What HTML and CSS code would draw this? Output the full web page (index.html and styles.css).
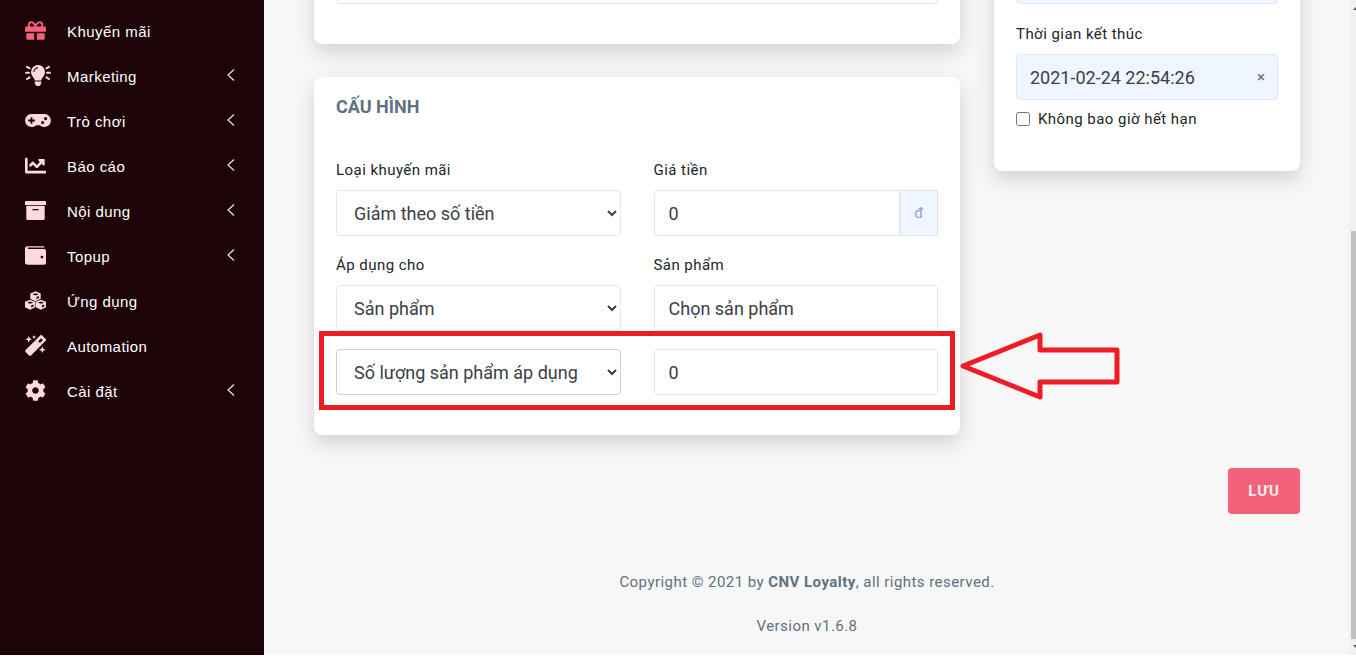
FILE: index.html
```
<!DOCTYPE html>
<html lang="vi">
<head>
    <meta charset="UTF-8">
    <meta name="viewport" content="width=device-width, initial-scale=1.0">
    <title>CNV Loyalty - Khuyến mãi</title>
    <link rel="stylesheet" href="styles.css">
</head>
<body>
    <div class="app">
        <nav class="sidebar">
            <a class="nav-item active" href="#">
                <span class="nav-icon"><svg width="21" height="21" viewBox="0 0 512 512"><path d="M32 448c0 17.7 14.3 32 32 32h160V320H32v128zm256 32h160c17.7 0 32-14.3 32-32V320H288v160zm192-320h-42.1c6.2-12.1 10.1-25.5 10.1-40 0-48.5-39.5-88-88-88-41.6 0-68.5 21.3-103 68.3-34.5-47-61.4-68.3-103-68.3-48.5 0-88 39.5-88 88 0 14.5 3.8 27.9 10.1 40H32c-17.7 0-32 14.3-32 32v80c0 8.8 7.2 16 16 16h480c8.8 0 16-7.2 16-16v-80c0-17.7-14.3-32-32-32zm-326.1 0c-22.1 0-40-17.9-40-40s17.9-40 40-40c19.9 0 34.6 3.3 86.1 80h-86.1zm206.1 0h-86.1c51.4-76.5 65.7-80 86.1-80 22.1 0 40 17.9 40 40s-17.9 40-40 40z"/></svg></span>
                <span class="nav-text">Khuyến mãi</span>
            </a>
            <a class="nav-item" href="#">
                <span class="nav-icon"><svg width="26" height="21" viewBox="0 0 26 21"><path fill-rule="evenodd" d="M13 0a7 7 0 0 0-7 7c0 2 .8 3.400 1.800 4.700C8.800 13 9.500 14 9.800 15.500h6.400c.3-1.500 1-2.500 2-3.800C19.200 10.400 20 9 20 7a7 7 0 0 0-7-7zm0 3.400A3.600 3.600 0 0 0 9.400 7H8.300A4.700 4.700 0 0 1 13 2.300zM9.800 16.600h6.400v1.900L15 20.400a1 1 0 0 1-.8.500h-2.400a1 1 0 0 1-.8-.5l-1.200-1.900z"/><path class="stroke" d="M1 7.800h3M22 7.800h3M2 1.900l2.600 1.400M24 1.900l-2.600 1.400M2 14l2.600-1.600M24 14l-2.600-1.600"/></svg></span>
                <span class="nav-text">Marketing</span>
                <svg class="chevron" width="8" height="12" viewBox="0 0 8 12"><path d="M7 .5 1 6l6 5.500"/></svg>
            </a>
            <a class="nav-item" href="#">
                <span class="nav-icon"><svg width="26" height="21" viewBox="0 0 26 21"><path fill-rule="evenodd" d="M6.500 4h13a6.500 6.500 0 1 1-4.600 11.200h-3.800A6.500 6.500 0 1 1 6.500 4zm-.9 3.200v2.400H3.200v1.800h2.400v2.400h1.800v-2.400h2.400V9.600H7.400V7.200zM17.600 11a1.600 1.600 0 1 0 0 3.200 1.600 1.600 0 0 0 0-3.200zm3-4a1.600 1.600 0 1 0 0 3.200 1.600 1.600 0 0 0 0-3.200z"/></svg></span>
                <span class="nav-text">Trò chơi</span>
                <svg class="chevron" width="8" height="12" viewBox="0 0 8 12"><path d="M7 .5 1 6l6 5.500"/></svg>
            </a>
            <a class="nav-item" href="#">
                <span class="nav-icon"><svg width="21" height="21" viewBox="0 0 512 512"><path d="M496 384H64V80c0-8.840-7.160-16-16-16H16C7.160 64 0 71.160 0 80v336c0 17.670 14.330 32 32 32h464c8.840 0 16-7.160 16-16v-32c0-8.840-7.160-16-16-16zM464 96H345.940c-21.380 0-32.090 25.850-16.970 40.970l32.400 32.400L288 242.750l-73.370-73.370c-12.500-12.500-32.760-12.500-45.250 0l-68.690 68.690c-6.250 6.250-6.250 16.380 0 22.630l22.620 22.620c6.250 6.250 16.380 6.250 22.630 0L192 237.250l73.370 73.370c12.500 12.500 32.760 12.500 45.250 0l96-96 32.400 32.400c15.120 15.120 40.970 4.410 40.970-16.970V112c.01-8.840-7.150-16-15.990-16z"/></svg></span>
                <span class="nav-text">Báo cáo</span>
                <svg class="chevron" width="8" height="12" viewBox="0 0 8 12"><path d="M7 .5 1 6l6 5.500"/></svg>
            </a>
            <a class="nav-item" href="#">
                <span class="nav-icon"><svg width="21" height="21" viewBox="0 0 21 21"><path fill-rule="evenodd" d="M1 1h19a1 1 0 0 1 1 1v3H0V2a1 1 0 0 1 1-1zM1.300 5.800h18.400v12.900a1.300 1.300 0 0 1-1.300 1.300H2.600a1.300 1.300 0 0 1-1.300-1.300zM8 9a.6.6 0 0 0 0 1.300h5A.6.6 0 0 0 13 9z"/></svg></span>
                <span class="nav-text">Nội dung</span>
                <svg class="chevron" width="8" height="12" viewBox="0 0 8 12"><path d="M7 .5 1 6l6 5.500"/></svg>
            </a>
            <a class="nav-item" href="#">
                <span class="nav-icon"><svg width="21" height="21" viewBox="0 0 21 21"><path fill-rule="evenodd" d="M2.600 1.300h15.700a1.300 1.300 0 0 1 1.300 1.300H3.300a.65.65 0 0 0 0 1.300h15.700a2 2 0 0 1 2 2v11.800a2 2 0 0 1-2 2H2.600A2.600 2.600 0 0 1 0 17.100V3.900a2.600 2.600 0 0 1 2.600-2.600zM17 10.700a1.400 1.400 0 1 0 0 2.800 1.400 1.400 0 0 0 0-2.800z"/></svg></span>
                <span class="nav-text">Topup</span>
                <svg class="chevron" width="8" height="12" viewBox="0 0 8 12"><path d="M7 .5 1 6l6 5.500"/></svg>
            </a>
            <a class="nav-item" href="#">
                <span class="nav-icon"><svg width="21" height="21" viewBox="0 0 21 21"><g fill-rule="evenodd"><path d="M10.500 1.300 15.700 3.400V8.800l-5.200 2.400L5.300 8.800V3.400zM7.400 4.300l3.100 1.100 3.100-1.100-3.100-1.100zM11.500 7v2.200l2.400-1.100V6z"/><path d="M5.100 9.700 10.300 11.700v5.600l-5.200 2.400L0 17.300v-5.600zM2 12.700l3.100 1.100 3.100-1.100-3.100-1.100zM6.100 15.400v2.200l2.400-1.100v-2.100z"/><path d="M15.900 9.700l5.100 2v5.600l-5.100 2.400-5.200-2.400v-5.600zM12.800 12.700l3.100 1.100 3.100-1.100-3.100-1.100zM16.900 15.400v2.200l2.400-1.100v-2.100z"/></g></svg></span>
                <span class="nav-text">Ứng dụng</span>
            </a>
            <a class="nav-item" href="#">
                <span class="nav-icon"><svg width="21" height="21" viewBox="0 0 21 21"><path fill-rule="evenodd" d="M15.200.4a1.400 1.400 0 0 1 1.900 0l3.500 3.500a1.400 1.400 0 0 1 0 1.900L6 20.400a1.400 1.400 0 0 1-1.900 0L.6 16.900a1.400 1.400 0 0 1 0-1.900zM16.200 3.200l-3 3 1.700 1.700 3-3zM3.700 1l1 2.200L7 4.200l-2.300 1-1 2.300-1-2.300-2.300-1 2.300-1zM9 0l.7 1.400 1.400.6-1.400.7L9 4l-.7-1.300L7 2l1.300-.6zM17.300 11.500l1 2.200 2.300 1-2.300 1-1 2.300-1-2.300-2.300-1 2.300-1z"/></svg></span>
                <span class="nav-text">Automation</span>
            </a>
            <a class="nav-item" href="#">
                <span class="nav-icon"><svg width="21" height="21" viewBox="0 0 512 512"><path d="M487.400 315.700l-42.600-24.600c4.300-23.200 4.300-47 0-70.200l42.600-24.600c4.900-2.800 7.100-8.600 5.500-14-11.100-35.600-30-67.800-54.700-94.600-3.800-4.100-10-5.100-14.800-2.300L380.800 110c-17.900-15.400-38.500-27.300-60.800-35.100V25.800c0-5.600-3.900-10.500-9.400-11.700-36.700-8.200-74.300-7.800-109.200 0-5.500 1.200-9.400 6.100-9.400 11.700V75c-22.200 7.900-42.800 19.800-60.800 35.100L88.700 85.500c-4.900-2.800-11-1.900-14.800 2.300-24.700 26.700-43.600 58.900-54.700 94.600-1.700 5.400.6 11.200 5.500 14L67.300 221c-4.300 23.200-4.300 47 0 70.200l-42.600 24.600c-4.900 2.800-7.100 8.600-5.500 14 11.100 35.600 30 67.800 54.700 94.600 3.800 4.100 10 5.100 14.800 2.300l42.600-24.600c17.900 15.400 38.500 27.300 60.800 35.100v49.200c0 5.600 3.900 10.500 9.400 11.700 36.700 8.200 74.300 7.800 109.200 0 5.500-1.200 9.400-6.100 9.400-11.700v-49.200c22.200-7.900 42.800-19.800 60.800-35.100l42.600 24.600c4.900 2.800 11 1.900 14.800-2.300 24.700-26.700 43.600-58.900 54.700-94.600 1.500-5.500-.7-11.300-5.600-14.100zM256 336c-44.100 0-80-35.900-80-80s35.900-80 80-80 80 35.900 80 80-35.900 80-80 80z"/></svg></span>
                <span class="nav-text">Cài đặt</span>
                <svg class="chevron" width="8" height="12" viewBox="0 0 8 12"><path d="M7 .5 1 6l6 5.500"/></svg>
            </a>
        </nav>

        <main class="main">
            <div class="columns">
                <div class="column">
                    <section class="card">
                        <input class="control" type="text" aria-label="Mô tả">
                    </section>

                    <section class="card">
                        <h2 class="card-title">CẤU HÌNH</h2>
                        <div class="form-grid">
                            <div class="field">
                                <label for="type">Loại khuyến mãi</label>
                                <select class="control" id="type"><option>Giảm theo số tiền</option></select>
                            </div>
                            <div class="field">
                                <label for="price">Giá tiền</label>
                                <div class="input-group">
                                    <input class="control" id="price" type="text" value="0">
                                    <span class="addon">đ</span>
                                </div>
                            </div>
                            <div class="field">
                                <label for="apply">Áp dụng cho</label>
                                <select class="control" id="apply"><option>Sản phẩm</option></select>
                            </div>
                            <div class="field">
                                <label for="product">Sản phẩm</label>
                                <input class="control" id="product" type="text" value="Chọn sản phẩm">
                            </div>
                        </div>
                        <div class="form-grid highlighted">
                            <select class="control focused" aria-label="Điều kiện"><option>Số lượng sản phẩm áp dụng</option></select>
                            <input class="control" type="text" value="0" aria-label="Số lượng">
                            <div class="highlight-box"></div>
                            <svg class="highlight-arrow" width="160" height="70" viewBox="0 0 160 70"><path d="M3 35 80 4v15h77v32H80v15z"/></svg>
                        </div>
                    </section>
                </div>

                <div class="column">
                    <section class="card">
                        <input class="control filled" type="text" aria-label="Thời gian bắt đầu">
                        <div class="field">
                            <label for="end">Thời gian kết thúc</label>
                            <div class="date-box">
                                <input class="control filled" id="end" type="text" value="2021-02-24 22:54:26">
                                <button class="clear" type="button" aria-label="Xóa">×</button>
                            </div>
                        </div>
                        <label class="check"><input type="checkbox">Không bao giờ hết hạn</label>
                    </section>
                </div>
            </div>

            <div class="actions">
                <button class="save" type="submit">LƯU</button>
            </div>

            <footer class="footer">
                <p>Copyright © 2021 by <strong>CNV Loyalty</strong>, all rights reserved.</p>
                <p>Version v1.6.8</p>
            </footer>
        </main>

        <div class="scrollbar">
            <svg width="3" height="4" viewBox="0 0 3 4"><path d="M0 4 3 1v3z"/></svg>
            <div class="thumb"></div>
            <svg width="3" height="4" viewBox="0 0 3 4"><path d="M0 0h3v3z"/></svg>
        </div>
    </div>
</body>
</html>
```
FILE: styles.css
```
* {
    box-sizing: border-box;
}

body {
    margin: 0;
    font-family: Roboto, sans-serif;
    font-size: 15px;
    line-height: 24px;
    letter-spacing: 0.03em;
    color: #212529;
    background: #fff;
}

.app {
    display: flex;
    height: calc(100vh - 3px);
    overflow: hidden;
    background: #f7f7f7;
}

/* Sidebar */
.sidebar {
    flex: 0 0 264px;
    padding-top: 9px;
    background: #1d0409;
    font-family: "Liberation Sans", Arial, sans-serif;
}

.nav-item {
    display: flex;
    align-items: center;
    height: 45px;
    padding: 0 29px 0 25px;
    color: #fff;
    text-decoration: none;
}

.nav-icon {
    display: flex;
    width: 42px;
    margin-bottom: 3px;
    fill: #ffd9df;
}

.nav-icon .stroke {
    stroke: #ffd9df;
    stroke-width: 2;
    stroke-linecap: round;
}

.active .nav-icon {
    fill: #f3627a;
}

.nav-text {
    flex: 1;
}

.chevron {
    margin-bottom: 3px;
    fill: none;
    stroke: #e8e4e5;
    stroke-width: 1.2;
}

/* Content, scrolled down past the first fields */
.main {
    flex: 1;
    min-width: 0;
    padding: 0 49px 0 50px;
}

.columns {
    display: grid;
    grid-template-columns: 2fr 1fr;
    margin: -64px -17px 0;
}

.column {
    padding: 0 17px;
    min-width: 0;
}

.card {
    padding: 22px 22px 40px;
    margin-bottom: 33px;
    background: #fff;
    border-radius: 8px;
    box-shadow: 0 8px 20px rgba(0, 0, 0, 0.15);
}

.card-title {
    margin: -4px 0 39px;
    font-size: 18px;
    line-height: 24px;
    letter-spacing: normal;
    color: #60717f;
}

.form-grid {
    display: grid;
    grid-template-columns: 1fr 1fr;
    gap: 17px 33px;
}

.field label {
    display: block;
    margin-bottom: 8px;
}

.control {
    display: block;
    width: 100%;
    height: 46px;
    padding: 0 14px;
    border: 1px solid #e1e8f2;
    border-radius: 4px;
    background: #fff;
    color: #3b4046;
    font: 18px Roboto, sans-serif;
}

select.control {
    padding: 0 2px 0 13px;
}

.filled {
    padding: 0 13px;
    background: #eff6ff;
}

.focused {
    border-color: #c8d3df;
}

.input-group {
    display: flex;
}

.input-group .control {
    flex: 1;
    min-width: 0;
    border-radius: 4px 0 0 4px;
}

.addon {
    flex: 0 0 38px;
    border: 1px solid #dbe5f1;
    background: #eff6ff;
    color: #95a6c4;
    line-height: 44px;
    text-align: center;
}

/* Marked row */
.highlighted {
    position: relative;
    margin-top: 18px;
}

.highlight-box {
    position: absolute;
    inset: -18px -17px -15px;
    border: 5px solid #ee1c25;
    pointer-events: none;
}

.highlight-arrow {
    position: absolute;
    top: -18px;
    left: calc(100% + 22px);
    fill: none;
    stroke: #ee1c25;
    stroke-width: 5;
    stroke-linejoin: round;
}

.column .control + .field {
    margin-top: 18px;
}

.date-box {
    position: relative;
}

.clear {
    position: absolute;
    top: 11px;
    right: 8px;
    width: 18px;
    height: 24px;
    padding: 0;
    border: 0;
    background: none;
    color: #666;
    font: 15px Roboto, sans-serif;
}

.check {
    display: flex;
    align-items: center;
    gap: 8px;
    margin-top: 7px;
}

.check input {
    width: 14px;
    height: 14px;
    margin: 0;
}

.actions {
    display: flex;
    justify-content: flex-end;
}

.save {
    width: 72px;
    height: 46px;
    border: 0;
    border-radius: 4px;
    background: #f3627a;
    color: #ffecef;
    font: bold 15px Roboto, sans-serif;
    letter-spacing: 1px;
}

.footer {
    margin-top: 56px;
    text-align: center;
    color: #60717f;
}

.footer p {
    margin: 0 0 20px;
}

/* Scrollbar */
.scrollbar {
    flex: 0 0 7px;
    display: flex;
    flex-direction: column;
    align-items: flex-end;
    padding: 6px 0;
    background: #f1f1f1;
    fill: #505050;
}

.thumb {
    flex: 0 1 408px;
    width: 5px;
    margin: auto 0 6px;
    background: #c1c1c1;
}
```
